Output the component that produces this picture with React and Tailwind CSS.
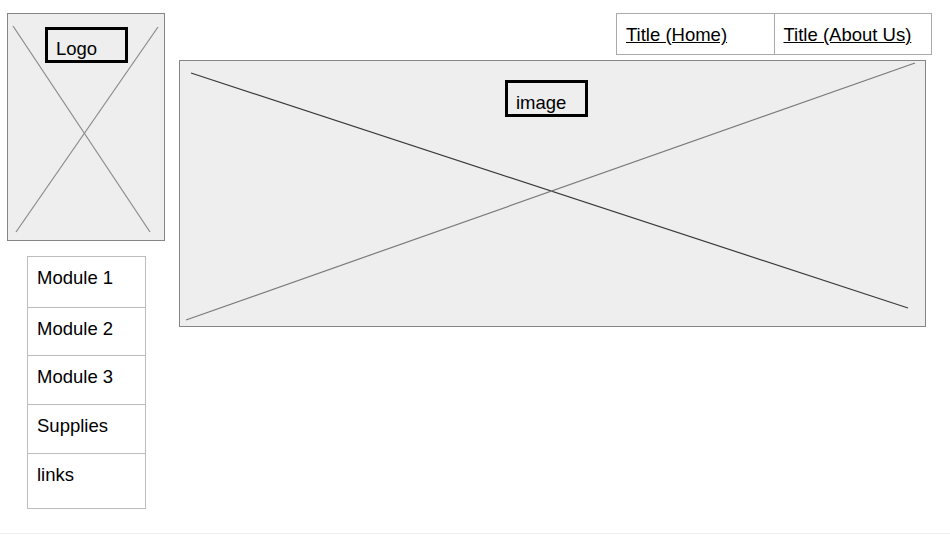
import React from 'react';

const font = { fontFamily: '"Liberation Sans", Arial, sans-serif' };

function Placeholder({ className, children, lines }) {
  return (
    <div className={`relative bg-[#eeeeee] border border-[#858585] ${className}`}>
      <svg className="absolute inset-0 w-full h-full" xmlns="http://www.w3.org/2000/svg">
        {lines.map((l, i) => (
          <line key={i} x1={l[0]} y1={l[1]} x2={l[2]} y2={l[3]} stroke={l[4]} strokeWidth="1.2" />
        ))}
      </svg>
      {children}
    </div>
  );
}

const modules = [
  { label: 'Module 1', h: 'h-[50px]' },
  { label: 'Module 2', h: 'h-[48px]' },
  { label: 'Module 3', h: 'h-[49px]' },
  { label: 'Supplies', h: 'h-[49px]' },
  { label: 'links', h: 'h-[55px]' },
];

export default function App() {
  return (
    <div className="w-[950px] h-[534px] bg-white border-b border-[#eeeeee] flex pt-[13px] text-black text-[18.5px] leading-[21px]" style={font}>
      {/* Left column */}
      <div className="ml-[7px] w-[158px] flex flex-col">
        <Placeholder
          className="w-[158px] h-[228px]"
          lines={[
            [5, 12, 142, 218, '#8a8a8a'],
            [150, 13, 8, 218, '#8a8a8a'],
          ]}
        >
          <div className="absolute left-[37px] top-[13px] w-[83px] h-[36px] border-[3px] border-black pl-[8px] pt-[8px]">
            Logo
          </div>
        </Placeholder>

        <div className="mt-[15px] ml-[20px] w-[119px] border border-[#bdbdbd]">
          {modules.map((m, i) => (
            <div key={m.label} className={`${m.h} px-[9px] pt-[10px] ${i > 0 ? 'border-t border-[#bdbdbd]' : ''}`}>
              {m.label}
            </div>
          ))}
        </div>
      </div>

      {/* Right column */}
      <div className="ml-[14px] w-[753px] flex flex-col">
        <div className="self-end w-[316px] h-[42px] flex border border-[#aaaaaa]">
          <div className="flex-1 flex items-center pl-[9px] pt-[1px] border-r border-[#aaaaaa]">
            <a href="#" className="underline">Title (Home)</a>
          </div>
          <div className="flex-1 flex items-center pl-[9px] pt-[1px]">
            <a href="#" className="underline">Title (About Us)</a>
          </div>
        </div>

        <Placeholder
          className="mt-[5px] w-[747px] h-[267px]"
          lines={[
            [11, 12, 728, 247, '#3a3a3a'],
            [6, 259, 735, 2, '#7a7a7a'],
          ]}
        >
          <div className="absolute left-[325px] top-[19px] w-[83px] h-[37px] border-[3px] border-black pl-[8px] pt-[9px]">
            image
          </div>
        </Placeholder>
      </div>
    </div>
  );
}
